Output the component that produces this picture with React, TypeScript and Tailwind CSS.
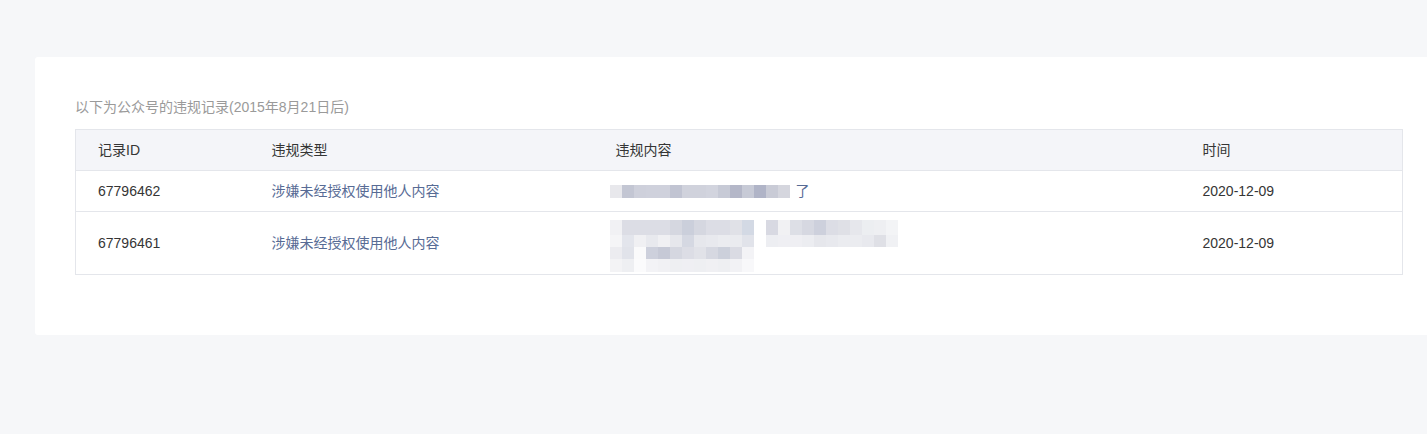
const row1 = [
  "#e8e8ec", "#c3c6d3", "#ced0db", "#cfd1dc", "#cfd1dc", "#c1c4d2", "#d0d2dc", "#d0d2dc",
  "#d2d4de", "#c7cad6", "#b4b7c8", "#c7cad6", "#b0b4c7", "#c9cbd6", "#d5d6de",
];

const row2 = [
  ["#f1f1f4", "#dcdde5", "#dcdde5", "#dcdde5", "#dcdde5", "#d5d7e0", "#cbcfdb", "#d5d7e0", "#dcdde5", "#dcdde5", "#e0e1e7", "#d3d9e4", "#ffffff", "#d8d9e2", "#f1f1f3", "#dddfe6", "#d6d8e1", "#cdd0dc", "#dcdde5", "#dfe0e6", "#e6e7ec", "#eceef1", "#eeeff2", "#f3f4f6"],
  ["#f5f5f7", "#e3e5ec", "#f0f0f3", "#e8e9ee", "#f0f0f3", "#e6e7ec", "#d5d8e2", "#e6e7ec", "#e8e9ee", "#ebecf0", "#eaebef", "#e1e3ea", "#ffffff", "#edeef2", "#efeff3", "#efeff3", "#ecedf1", "#e6e7ec", "#e8e9ee", "#ebecf0", "#ebecf0", "#e8e9ee", "#dfe0e6", "#f0f1f4"],
  ["#ececf0", "#e1e3ea", "#fafafb", "#cdd0dc", "#c6c9d6", "#d5d7e0", "#dcdde5", "#e1e2e8", "#d6d8e1", "#ccd0db", "#dadbe3", "#f3f3f6"],
  ["#f3f3f5", "#eeeff2", "#fbfbfc", "#f3f3f6", "#f1f1f4", "#eeeff2", "#efeff3", "#eeeff2", "#f0f0f3", "#eeeff2", "#f2f2f5", "#f8f8fa"],
];

function Cells({ colors, h }: { colors: string[]; h: string }) {
  return (
    <div className="flex">
      {colors.map((c, i) => (
        <div key={i} className={`w-[12px] ${h}`} style={{ backgroundColor: c }} />
      ))}
    </div>
  );
}

export default function App() {
  return (
    <div
      className="min-h-[434px] bg-[#f6f7f9] pt-[57px] text-[14px] text-[#353535]"
      style={{ fontFamily: '"Liberation Sans", "Noto Sans CJK SC", sans-serif' }}
    >
      <div className="ml-[35px] h-[278px] rounded-tl-[3px] rounded-bl-[3px] bg-white pl-[40px] pr-[24px] pt-[40px]">
        <div className="mb-[12px] leading-[20px] text-[#9a9a9a]">以下为公众号的违规记录(2015年8月21日后)</div>
        <table className="w-full table-fixed border-collapse border border-[#e4e6eb]">
          <colgroup>
            <col className="w-[174px]" />
            <col className="w-[344px]" />
            <col className="w-[587px]" />
            <col />
          </colgroup>
          <thead>
            <tr className="h-[41px] bg-[#f4f5f9] text-left">
              <th className="pl-[22px] font-normal">记录ID</th>
              <th className="pl-[22px] font-normal">违规类型</th>
              <th className="pl-[22px] font-normal">违规内容</th>
              <th className="pl-[22px] font-normal">时间</th>
            </tr>
          </thead>
          <tbody>
            <tr className="h-[41px] border-t border-[#e4e6eb]">
              <td className="pl-[22px]">67796462</td>
              <td className="pl-[22px] text-[#576b95]">涉嫌未经授权使用他人内容</td>
              <td className="pl-[16px]">
                <div className="flex items-center">
                  <div className="flex blur-[0.4px]">
                    {row1.map((c, i) => (
                      <div key={i} className="h-[13px] w-[12px]" style={{ backgroundColor: c }} />
                    ))}
                  </div>
                  <span className="ml-[6px] text-[#576b95]">了</span>
                </div>
              </td>
              <td className="pl-[22px]">2020-12-09</td>
            </tr>
            <tr className="h-[63px] border-t border-[#e4e6eb]">
              <td className="pl-[22px]">67796461</td>
              <td className="pl-[22px] text-[#576b95]">涉嫌未经授权使用他人内容</td>
              <td className="pl-[16px] pt-[5px]">
                <div className="blur-[0.5px]">
                  <Cells colors={row2[0]} h="h-[15px]" />
                  <Cells colors={row2[1]} h="h-[12px]" />
                  <Cells colors={row2[2]} h="h-[12px]" />
                  <Cells colors={row2[3]} h="h-[13px]" />
                </div>
              </td>
              <td className="pl-[22px]">2020-12-09</td>
            </tr>
          </tbody>
        </table>
      </div>
    </div>
  );
}
